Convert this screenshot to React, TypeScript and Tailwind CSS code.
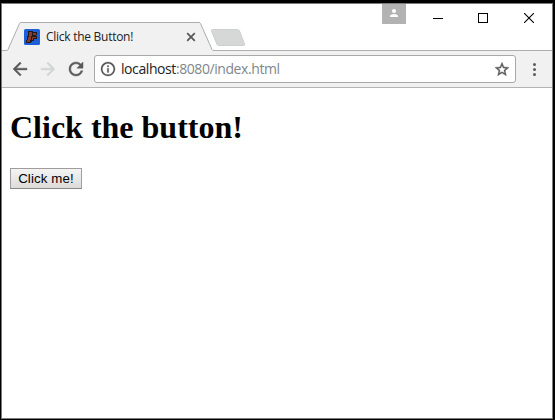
import type { ReactNode } from "react";

type GlyphProps = { d: string; box: string; className: string };

function Glyph({ d, box, className }: GlyphProps) {
  return (
    <svg viewBox={box} className={`shrink-0 overflow-visible ${className}`} fill="currentColor" stroke="currentColor">
      <path d={d} />
    </svg>
  );
}

const BACK = "M20 11H7.83l5.59-5.59L12 4l-8 8 8 8 1.41-1.41L7.83 13H20v-2z";
const FORWARD = "M12 4l-1.41 1.41L16.17 11H4v2h12.17l-5.58 5.59L12 20l8-8z";
const RELOAD =
  "M17.65 6.35C16.2 4.9 14.21 4 12 4c-4.42 0-7.99 3.58-7.99 8s3.57 8 7.99 8c3.73 0 6.84-2.55 7.73-6h-2.08c-.82 2.33-3.04 4-5.65 4-3.31 0-6-2.69-6-6s2.69-6 6-6c1.66 0 3.14.69 4.22 1.78L13 11h7V4l-2.35 2.35z";
const STAR =
  "M22 9.24l-7.19-.62L12 2 9.19 8.63 2 9.24l5.46 4.73L5.82 21 12 17.27 18.18 21l-1.63-7.03L22 9.24zM12 15.4l-3.76 2.27 1-4.28-3.32-2.88 4.38-.38L12 6.1l1.71 4.04 4.38.38-3.32 2.88 1 4.28L12 15.4z";

function Favicon() {
  return (
    <svg viewBox="0 0 16 16" className="h-4 w-4 shrink-0">
      <rect width="16" height="16" rx="1.5" fill="#1b5fd9" />
      <g shapeRendering="crispEdges">
        <path d="M4 2h5v1h4v3h-1v1h1v3h-3v2H8v1H7v1H2v-3h1V7h1z" fill="#21191c" />
        <path d="M5 3h3v4H7v4H6v2H3v-2h1V8h1zM9 4h3v2H9zM8 8h4v1H9v2H8z" fill="#8a3d26" />
      </g>
    </svg>
  );
}

function Tab() {
  return (
    <div className="relative h-[29px] w-[212px]">
      <svg viewBox="0 0 212 29" className="absolute inset-0 h-[29px] w-[212px]">
        <path d="M0 29V28.5H4.5Q5.5 28.5 6 27.5L17.5 1.5Q18 .5 19 .5H197Q198 .5 198.5 1.5L210 27.5Q210.5 28.5 212 28.5V29Z" fill="#f1f1f1" />
        <path d="M0 28.5H4.5Q5.5 28.5 6 27.5L17.5 1.5Q18 .5 19 .5H197Q198 .5 198.5 1.5L210 27.5Q210.5 28.5 212 28.5" fill="none" stroke="#adadad" />
      </svg>
      <div className="relative flex h-[29px] items-center pl-[22px]">
        <Favicon />
        <span className="ml-[6px] w-[141px] whitespace-nowrap font-['Open_Sans',sans-serif] text-[12px] leading-4 tracking-[-0.27px] text-[#222]">
          Click the Button!
        </span>
        <svg viewBox="0 0 8 8" className="h-2 w-2 shrink-0 overflow-visible">
          <path d="M.2.2l7.6 7.6M7.8.2L.2 7.8" stroke="#5a5a5a" strokeWidth="1.8" />
        </svg>
      </div>
    </div>
  );
}

function TabStrip() {
  return (
    <div className="relative flex h-[47px] items-end bg-white">
      <div className="absolute bottom-0 left-0 h-px w-full bg-[#adadad]" />
      <Tab />
      <svg viewBox="0 0 36 18" className="-ml-[4px] mb-[4px] h-[18px] w-9">
        <path d="M2.5 .5H27.5Q29 .5 29.5 2L34.5 15Q35 16.5 33.5 16.5H9Q7.5 16.5 7 15.5L1.5 2Q1 .5 2.5 .5Z" fill="#d6d8d7" stroke="#cdcfce" />
      </svg>
      <div className="ml-auto flex h-full items-start">
        <div className="mr-[27px] flex h-5 w-6 justify-center bg-[#b2b2b2] pt-[5px]">
          <svg viewBox="0 0 8 8" className="h-2 w-2 text-white" fill="currentColor">
            <circle cx="4" cy="2" r="2" />
            <path d="M0 8V6.700Q1 5 4 5t4 1.700V8z" />
          </svg>
        </div>
        <div className="mt-[14px] h-px w-[10px] bg-black" />
        <div className="ml-[35px] mt-[9px] h-[10px] w-[10px] border border-black" />
        <svg viewBox="0 0 10 10" className="ml-[36px] mr-[18px] mt-[9px] h-[10px] w-[10px]">
          <path d="M0 0l10 10M10 0L0 10" stroke="#000" strokeWidth="1.1" />
        </svg>
      </div>
    </div>
  );
}

function AddressBar() {
  return (
    <div className="ml-[11px] flex h-7 w-[422px] items-center rounded-[3px] border border-[#a9a9a9] bg-white pl-[6px] pr-[6px]">
      <Glyph box="2 2 20 20" className="h-[14px] w-[14px] stroke-[0.4] text-[#505050]" d="M11 17h2v-6h-2v6zm1-15C6.48 2 2 6.48 2 12s4.48 10 10 10 10-4.48 10-10S17.52 2 12 2zm0 18c-4.41 0-8-3.59-8-8s3.59-8 8-8 8 3.59 8 8-3.59 8-8 8zM11 9h2V7h-2v2z" />
      <span className="ml-[6px] whitespace-nowrap font-['Open_Sans',sans-serif] text-[14px] leading-5 tracking-[-0.42px] text-[#222]">
        localhost<span className="text-[#80868a]">:8080/index.html</span>
      </span>
      <Glyph box="2 2 20 19" className="ml-auto h-[14px] w-[14px] stroke-[0.6] text-[#5a5a5a]" d={STAR} />
    </div>
  );
}

function Toolbar() {
  return (
    <div className="flex h-[37px] items-center border-b border-[#b3b3b3] bg-[#f1f1f1] pl-[11px]">
      <Glyph box="4 4 16 16" className="h-[14px] w-[14px] stroke-[0.5] text-[#5a5a5a]" d={BACK} />
      <Glyph box="4 4 16 16" className="ml-[14px] h-[14px] w-[14px] stroke-[0.5] text-[#d2d5d6]" d={FORWARD} />
      <Glyph box="4 4 16 16" className="ml-[14px] h-[14px] w-[14px] stroke-[0.5] text-[#5a5a5a]" d={RELOAD} />
      <AddressBar />
      <div className="ml-[17px] flex flex-col gap-[2px]">
        <i className="h-[3px] w-[3px] rounded-full bg-[#5a5a5a]" />
        <i className="h-[3px] w-[3px] rounded-full bg-[#5a5a5a]" />
        <i className="h-[3px] w-[3px] rounded-full bg-[#5a5a5a]" />
      </div>
    </div>
  );
}

function Page({ children }: { children: ReactNode }) {
  return <main className="flex flex-1 flex-col items-start bg-white pl-2">{children}</main>;
}

export default function App() {
  return (
    <div className="h-[420px] w-[555px] bg-black pl-px pr-[2px] pt-[3px] pb-px">
      <div className="flex h-full flex-col border border-[#7a7a7a]">
        <TabStrip />
        <Toolbar />
        <Page>
          <h1 className="mt-[21px] whitespace-nowrap font-['Liberation_Serif',serif] text-[32px] font-bold leading-[37px] text-black">
            Click the button!
          </h1>
          <button className="mt-[22px] h-[21px] w-[72px] whitespace-nowrap border border-[#a19c9c] border-b-[#8b8585] bg-linear-to-b from-[#f4f4f4] to-[#dddcdb] font-['Liberation_Sans',sans-serif] text-[13.3px] leading-[18px] tracking-[0.12px] text-black">
            Click me!
          </button>
        </Page>
      </div>
    </div>
  );
}
